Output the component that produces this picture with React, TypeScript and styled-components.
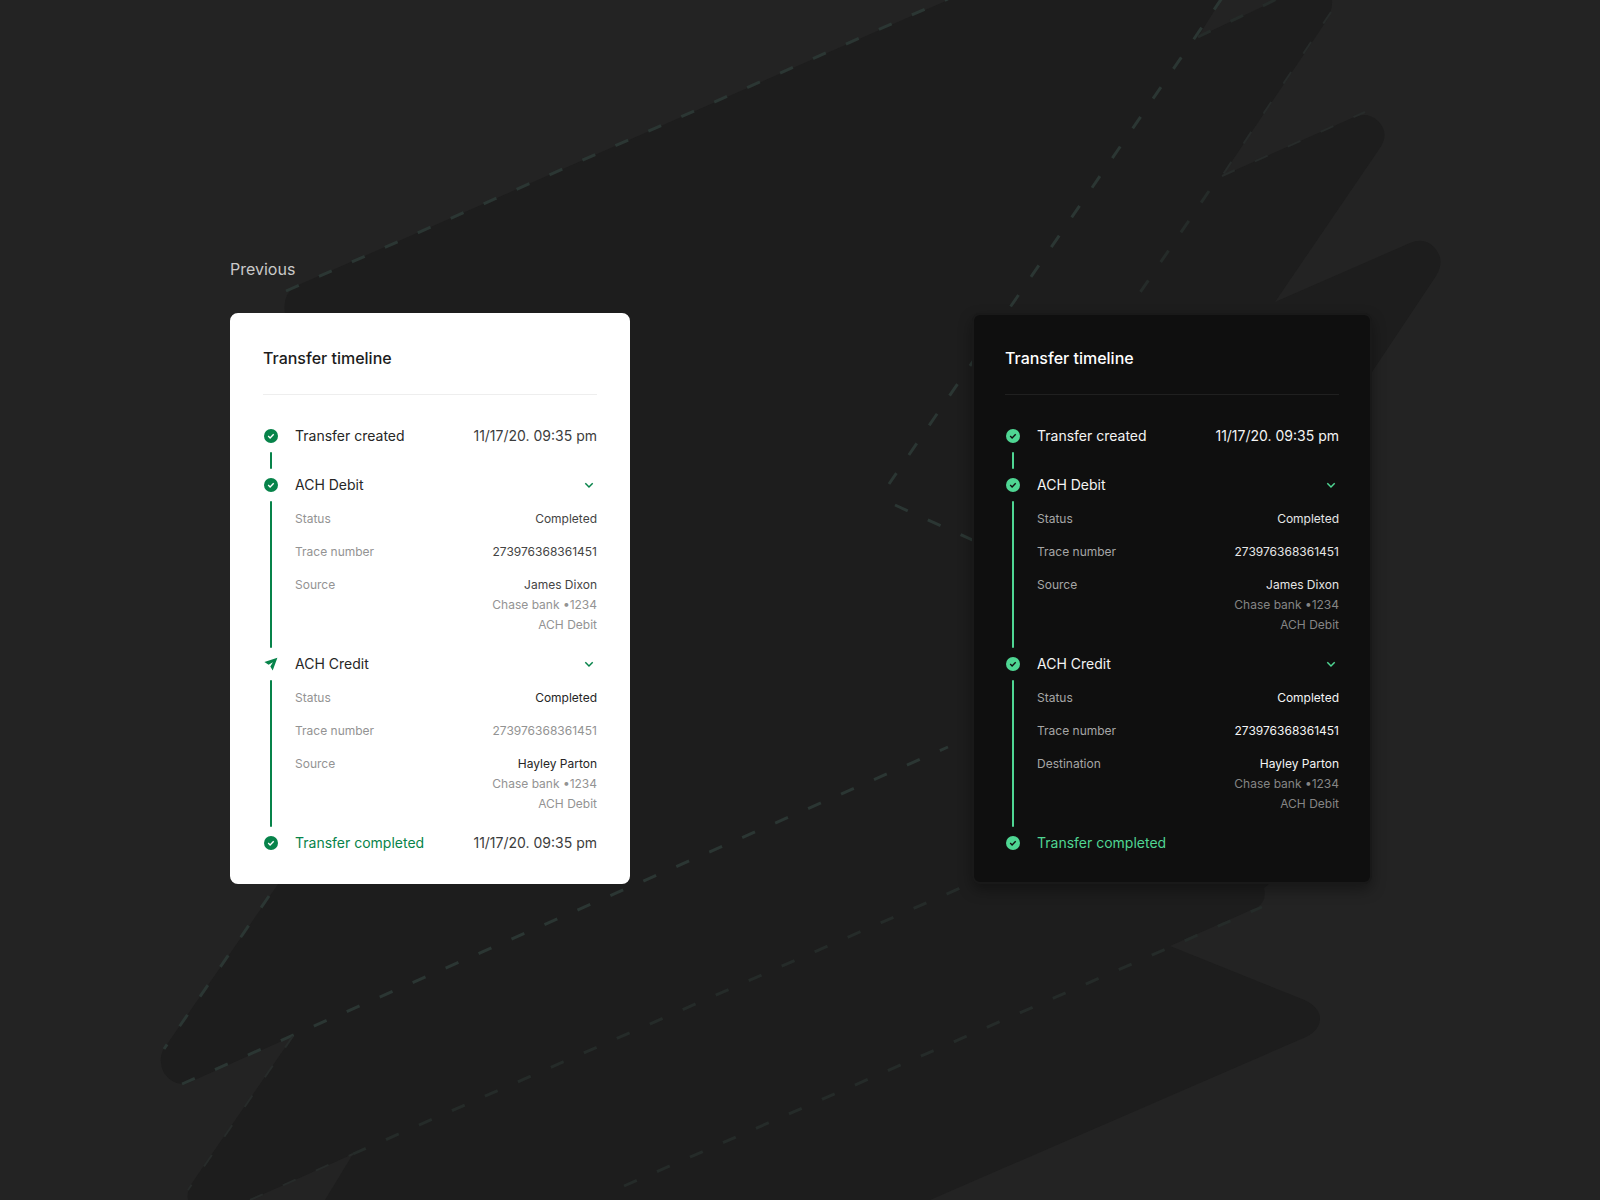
import React, { useState } from "react";
import styled, { createGlobalStyle, ThemeProvider } from "styled-components";

const light = {
  surface: "#ffffff",
  border: "#ffffff",
  shadow: "none",
  divider: "#eeeeee",
  title: "#1c1c1c",
  heading: "#262626",
  date: "#3c3c3c",
  accent: "#07834a",
  tick: "#ffffff",
  label: "#939393",
  strong: "#262626",
  value: "#444444",
  muted: "#939393",
};

const dark: typeof light = {
  surface: "#0f0f0f",
  border: "#191919",
  shadow: "0 6px 14px rgba(0, 0, 0, 0.35)",
  divider: "#202020",
  title: "#ffffff",
  heading: "#f4f4f4",
  date: "#f4f4f4",
  accent: "#4fd693",
  tick: "#0f0f0f",
  label: "#a6a6a6",
  strong: "#f4f4f4",
  value: "#e6e6e6",
  muted: "#858585",
};

type Tone = "strong" | "value" | "muted";
type Palette = { theme: typeof light };

const GlobalStyle = createGlobalStyle`
  *, *::before, *::after { box-sizing: border-box; }
  body {
    margin: 0;
    background: #232323;
    font-family: Inter, "Open Sans", sans-serif;
  }
  h2, h3, p, ol, dl, dd { margin: 0; padding: 0; }
`;

const Page = styled.main`
  position: relative;
  min-height: 100vh;
  padding: 257px 228px 64px 230px;
  overflow: hidden;
`;

const Backdrop = styled.svg`
  position: absolute;
  inset: 0;
  width: 100%;
  height: 100%;
`;

const Versions = styled.div`
  position: relative;
  display: flex;
  flex-wrap: wrap;
  align-items: flex-end;
  justify-content: space-between;
  gap: 32px;
`;

const Version = styled.section`
  display: flex;
  flex-direction: column;
  gap: 32px;
  flex: 0 1 400px;
`;

const VersionName = styled.p`
  color: #c9c9c9;
  font-size: 16px;
  line-height: 24px;
`;

const Card = styled.article<Palette>`
  padding: 31px;
  border: 2px solid ${(p) => p.theme.border};
  border-radius: 8px;
  background: ${(p) => p.theme.surface};
  box-shadow: ${(p) => p.theme.shadow};
`;

const Title = styled.h2<Palette>`
  padding-bottom: 24px;
  border-bottom: 1px solid ${(p) => p.theme.divider};
  color: ${(p) => p.theme.title};
  font-size: 16px;
  font-weight: 500;
  line-height: 24px;
`;

const Steps = styled.ol`
  padding-top: 33px;
  list-style: none;
`;

const Step = styled.li`
  display: flex;
  gap: 16px;
`;

const Rail = styled.div<Palette>`
  display: flex;
  flex-direction: column;
  align-items: center;
  gap: 8px;
  color: ${(p) => p.theme.accent};
`;

const Line = styled.span`
  flex: 1;
  width: 2px;
  margin-bottom: 8px;
  border-radius: 1px;
  background: currentColor;
`;

const Body = styled.div<{ $spaced: boolean }>`
  flex: 1;
  padding-bottom: ${(p) => (p.$spaced ? 33 : 0)}px;
`;

const StepHeader = styled.div`
  display: flex;
  align-items: center;
  justify-content: space-between;
  height: 16px;
`;

const StepName = styled.h3<Palette & { $done?: boolean }>`
  color: ${(p) => (p.$done ? p.theme.accent : p.theme.heading)};
  font-size: 14px;
  font-weight: 400;
  line-height: 16px;
`;

const StepDate = styled.time<Palette>`
  color: ${(p) => p.theme.date};
  font-size: 14px;
  line-height: 16px;
`;

const Toggle = styled.button<Palette>`
  display: grid;
  place-items: center;
  width: 16px;
  height: 16px;
  padding: 0;
  border: 0;
  background: none;
  color: ${(p) => p.theme.accent};
  cursor: pointer;
`;

const Details = styled.dl`
  display: flex;
  flex-direction: column;
  gap: 13px;
  padding: 16px 0 21px;
`;

const Detail = styled.div`
  display: flex;
  justify-content: space-between;
  font-size: 12px;
  line-height: 20px;
`;

const Label = styled.dt<Palette>`
  color: ${(p) => p.theme.label};
`;

const Values = styled.dd`
  text-align: right;
`;

const Value = styled.p<Palette & { $tone: Tone }>`
  color: ${(p) => p.theme[p.$tone]};
`;

const TickCircle = styled.svg<Palette>`
  path {
    stroke: ${(p) => p.theme.tick};
  }
`;

function DoneIcon() {
  return (
    <TickCircle width="16" height="16" viewBox="0 0 16 16" fill="none" aria-hidden="true">
      <circle cx="8" cy="8" r="7" fill="currentColor" />
      <path d="M5.2 8.1 7.1 9.9 10.7 6.3" strokeWidth="1.4" />
    </TickCircle>
  );
}

function SentIcon() {
  return (
    <svg width="16" height="16" viewBox="0 0 16 16" aria-hidden="true">
      <path d="M14.4 1.8 1.4 6.1 5.6 8.8 9.9 6.2 7.3 10.4 9.7 14.4Z" fill="currentColor" />
    </svg>
  );
}

function ChevronIcon() {
  return (
    <svg width="16" height="16" viewBox="0 0 16 16" fill="none" aria-hidden="true">
      <path d="M4.3 6.3 8 10 11.7 6.3" stroke="currentColor" strokeWidth="1.5" />
    </svg>
  );
}

type Entry = { label: string; values: [string, Tone][] };
type StepData = {
  name: string;
  icon?: "sent";
  done?: boolean;
  date?: string;
  details?: Entry[];
};

const created: StepData = { name: "Transfer created", date: "11/17/20. 09:35 pm" };

const party = (label: string, name: string, tone: Tone): Entry => ({
  label,
  values: [
    [name, tone],
    ["Chase bank •1234", "muted"],
    ["ACH Debit", "muted"],
  ],
});

const transfer = (tone: Tone, trace: Tone, last: Entry): Entry[] => [
  { label: "Status", values: [["Completed", tone]] },
  { label: "Trace number", values: [["273976368361451", trace]] },
  last,
];

const previousSteps: StepData[] = [
  created,
  { name: "ACH Debit", details: transfer("value", "value", party("Source", "James Dixon", "value")) },
  {
    name: "ACH Credit",
    icon: "sent",
    details: transfer("strong", "muted", party("Source", "Hayley Parton", "strong")),
  },
  { name: "Transfer completed", done: true, date: "11/17/20. 09:35 pm" },
];

const currentSteps: StepData[] = [
  created,
  { name: "ACH Debit", details: transfer("value", "value", party("Source", "James Dixon", "value")) },
  {
    name: "ACH Credit",
    details: transfer("strong", "strong", party("Destination", "Hayley Parton", "strong")),
  },
  { name: "Transfer completed", done: true },
];

function TimelineStep({ step, last }: { step: StepData; last: boolean }) {
  const [open, setOpen] = useState(true);
  const expanded = Boolean(step.details) && open;
  return (
    <Step>
      <Rail>
        {step.icon === "sent" ? <SentIcon /> : <DoneIcon />}
        {!last && <Line />}
      </Rail>
      <Body $spaced={!last && !expanded}>
        <StepHeader>
          <StepName $done={step.done}>{step.name}</StepName>
          {step.date && <StepDate>{step.date}</StepDate>}
          {step.details && (
            <Toggle
              type="button"
              aria-label={`Toggle ${step.name} details`}
              aria-expanded={open}
              onClick={() => setOpen(!open)}
            >
              <ChevronIcon />
            </Toggle>
          )}
        </StepHeader>
        {expanded && (
          <Details>
            {step.details!.map((entry) => (
              <Detail key={entry.label}>
                <Label>{entry.label}</Label>
                <Values>
                  {entry.values.map(([text, tone]) => (
                    <Value key={text} $tone={tone}>
                      {text}
                    </Value>
                  ))}
                </Values>
              </Detail>
            ))}
          </Details>
        )}
      </Body>
    </Step>
  );
}

function TimelineCard({ steps }: { steps: StepData[] }) {
  return (
    <Card>
      <Title>Transfer timeline</Title>
      <Steps>
        {steps.map((step, i) => (
          <TimelineStep key={step.name} step={step} last={i === steps.length - 1} />
        ))}
      </Steps>
    </Card>
  );
}

function Bolts() {
  return (
    <Backdrop viewBox="0 0 1600 1200" preserveAspectRatio="xMidYMid slice" aria-hidden="true">
      <path
        fill="#1d1d1d"
        d="M948 0H1221L1198 37 1277 0H1332Q1333 11 1325 23L1222 176 1352 118Q1367 111 1378 121 1390 133 1380 148L1275 302 1410 243Q1424 237 1434 247 1446 260 1436 276L1300 480V860L1264 888Q1267 900 1258 907L1170 946 1302 999Q1319 1006 1320 1018 1320 1030 1306 1037L930 1200H325L353 1154 250 1200H188Q186 1193 192 1183L293 1036 188 1083Q174 1087 164 1073 158 1061 163 1050L430 665 286 318Q280 296 296 286Z"
      />
      <g fill="none" stroke="#2b3633" strokeWidth="3" strokeDasharray="14 22">
        <path d="M286 291 948 -1" />
        <path d="M1222 -2 889 484" />
        <path d="M895 505 1010 557" />
        <path d="M269 896 164 1049" />
        <path d="M182 1084 948 747" />
      </g>
      <g fill="none" stroke="#252b29" strokeWidth="3" strokeDasharray="14 22">
        <path d="M1198 37 1277 -1" />
        <path d="M1209 191 1135 300" />
        <path d="M353 1154 974 882" />
        <path d="M624 1186 1262 907" />
      </g>
      <g fill="none" stroke="#272b2a" strokeWidth="2" strokeDasharray="14 22">
        <path d="M1331 12 1222 176" />
        <path d="M1222 176 1365 112" />
        <path d="M293 1036 188 1190" />
        <path d="M250 1200 353 1154" />
      </g>
    </Backdrop>
  );
}

export default function App() {
  return (
    <>
      <GlobalStyle />
      <Page>
        <Bolts />
        <Versions>
          <ThemeProvider theme={light}>
            <Version aria-label="Previous">
              <VersionName>Previous</VersionName>
              <TimelineCard steps={previousSteps} />
            </Version>
          </ThemeProvider>
          <ThemeProvider theme={dark}>
            <Version aria-label="Current">
              <TimelineCard steps={currentSteps} />
            </Version>
          </ThemeProvider>
        </Versions>
      </Page>
    </>
  );
}
